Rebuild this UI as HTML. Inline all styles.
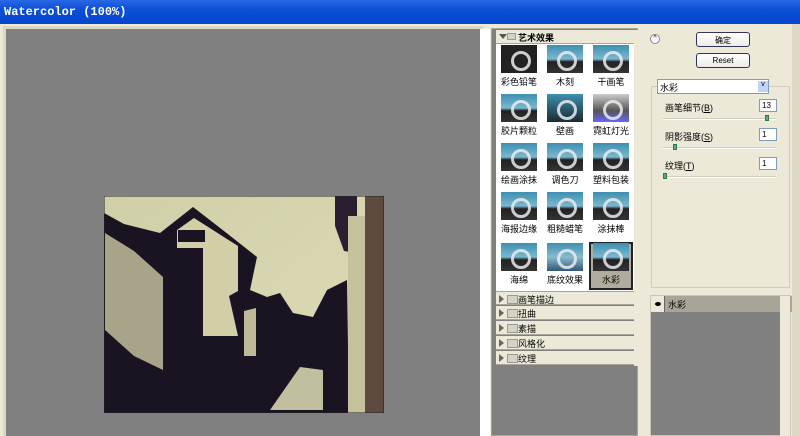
<!DOCTYPE html>
<html><head><meta charset="utf-8"><style>
*{margin:0;padding:0;box-sizing:border-box}
body{width:800px;height:436px;overflow:hidden;background:#ece9d8;font-family:"Liberation Sans","Noto Sans CJK SC",sans-serif;font-size:9px;position:relative}
.abs{position:absolute}
#title{left:0;top:0;width:800px;height:24px;background:linear-gradient(#2a67e6,#0a4fd8 40%,#0846cc);color:#fff;font-family:"Liberation Mono",monospace;font-size:12px;font-weight:bold;padding:5px 4px}
.thumb{position:absolute;width:36px;height:28px;background:linear-gradient(#3e8fb0,#7ab8d0 50%,#222 60%,#333);}
.thumb:after{content:"";position:absolute;left:10px;top:6px;width:14px;height:14px;border:3px solid rgba(235,235,240,.85);border-radius:50%}
.lbl{position:absolute;width:46px;text-align:center;font-size:9px;color:#000}
.cat{position:absolute;left:496px;width:138px;height:14px;border-bottom:1px solid #a8a598;background:#ece9d8;font-size:9px;padding:1px 0 0 22px}
.cat:before{content:"";position:absolute;left:3px;top:3px;border-left:5px solid #666;border-top:4px solid transparent;border-bottom:4px solid transparent}
.cat:after{content:"";position:absolute;left:11px;top:3px;width:9px;height:7px;background:#d6d3c6;border:1px solid #999}
.btn{position:absolute;left:696px;width:54px;height:15px;border:1px solid #335;border-radius:3px;background:linear-gradient(#fff,#ecebe6);text-align:center;font-size:8px;padding-top:2px}
.inp{position:absolute;left:759px;width:18px;height:13px;background:#fff;border:1px solid #7f9db9;font-size:8px;padding:1px 2px}
.sl{position:absolute;left:663px;width:113px;height:2px;background:#d0cdbf;border-bottom:1px solid #fff}
.kn{position:absolute;width:4px;height:6px;background:#5a8;border:1px solid #374}
</style></head><body>
<div id="title" class="abs">Watercolor (100%)</div>
<div class="abs" style="left:3px;top:26px;width:480px;height:410px;background:#ddd8c4"></div>
<div class="abs" style="left:6px;top:29px;width:474px;height:407px;background:#808080"></div>
<div class="abs" style="left:480px;top:29px;width:10px;height:407px;background:#fff"></div>
<svg class="abs" style="left:104px;top:196px" width="280" height="217" viewBox="0 0 280 217">
<defs><linearGradient id="sk" x1="0" y1="0" x2="1" y2="1"><stop offset="0" stop-color="#cfcfa8"/><stop offset="1" stop-color="#dedcb8"/></linearGradient></defs>
<rect width="280" height="217" fill="url(#sk)"/>
<polygon fill="#1a1422" points="0,17 20,28 56,37 89,11 120,35 153,61 146,94 163,101 176,97 189,117 209,121 223,94 243,84 245,217 0,217"/>
<polygon fill="#a8a48a" points="1,37 30,55 59,81 59,174 30,160 1,134"/>
<polygon fill="#d2cfa8" points="73,34 90,22 134,50 134,95 125,100 134,140 99,140 99,52 73,52"/>
<polygon fill="#1a1422" points="74,34 101,34 101,46 74,46"/>
<polygon fill="#bdb999" points="140,115 152,112 152,160 140,160"/>
<polygon fill="#2a1f30" points="231,0 253,0 253,57 240,55 231,30"/>
<rect x="244" y="20" width="17" height="197" fill="#c4c19c"/>
<rect x="261" y="0" width="19" height="217" fill="#5e4a3e"/>
<polygon fill="#c0bf9e" points="166,214 196,171 219,174 219,214"/>
<rect width="280" height="217" fill="none" stroke="#222" stroke-width="1"/>
</svg>
<div class="abs" style="left:491px;top:28px;width:147px;height:408px;border:1px solid #a8a598;background:#808080"></div>
<div class="abs" style="left:496px;top:30px;width:138px;height:265px;background:#fff"></div>
<div class="abs" style="left:496px;top:30px;width:138px;height:14px;background:#ece9d8;border-bottom:1px solid #a8a598;font-size:9px;padding:1px 0 0 22px;font-weight:bold">艺术效果</div>
<div class="abs" style="left:499px;top:34px;border-top:5px solid #555;border-left:4px solid transparent;border-right:4px solid transparent"></div>
<div class="abs" style="left:507px;top:33px;width:9px;height:7px;background:#d6d3c6;border:1px solid #999"></div>
<div class="abs" style="left:634px;top:30px;width:4px;height:336px;background:#ece9d8"></div>
<div class="abs" style="left:589px;top:242px;width:44px;height:48px;background:#b0ac9f;border:2px solid #222"></div>
<div class="thumb" style="left:501px;top:45px;background:#222"></div><div class="thumb" style="left:547px;top:45px"></div><div class="thumb" style="left:593px;top:45px"></div>
<div class="thumb" style="left:501px;top:94px"></div><div class="thumb" style="left:547px;top:94px;background:linear-gradient(#3e8fb0,#1a2a30)"></div><div class="thumb" style="left:593px;top:94px;background:linear-gradient(#ccc,#555 60%,#66f)"></div>
<div class="thumb" style="left:501px;top:143px"></div><div class="thumb" style="left:547px;top:143px"></div><div class="thumb" style="left:593px;top:143px"></div>
<div class="thumb" style="left:501px;top:192px"></div><div class="thumb" style="left:547px;top:192px"></div><div class="thumb" style="left:593px;top:192px"></div>
<div class="thumb" style="left:501px;top:243px"></div><div class="thumb" style="left:547px;top:243px;background:linear-gradient(#3e8fb0,#8bc 50%,#357)"></div><div class="thumb" style="left:593px;top:243px"></div>
<div class="lbl" style="left:496px;top:75px">彩色铅笔</div><div class="lbl" style="left:542px;top:75px">木刻</div><div class="lbl" style="left:588px;top:75px">干画笔</div>
<div class="lbl" style="left:496px;top:124px">胶片颗粒</div><div class="lbl" style="left:542px;top:124px">壁画</div><div class="lbl" style="left:588px;top:124px">霓虹灯光</div>
<div class="lbl" style="left:496px;top:173px">绘画涂抹</div><div class="lbl" style="left:542px;top:173px">调色刀</div><div class="lbl" style="left:588px;top:173px">塑料包装</div>
<div class="lbl" style="left:496px;top:222px">海报边缘</div><div class="lbl" style="left:542px;top:222px">粗糙蜡笔</div><div class="lbl" style="left:588px;top:222px">涂抹棒</div>
<div class="lbl" style="left:496px;top:273px">海绵</div><div class="lbl" style="left:542px;top:273px">底纹效果</div><div class="lbl" style="left:588px;top:273px">水彩</div>
<div class="cat" style="top:291px;border-top:1px solid #a8a598">画笔描边</div>
<div class="cat" style="top:306px">扭曲</div>
<div class="cat" style="top:321px">素描</div>
<div class="cat" style="top:336px">风格化</div>
<div class="cat" style="top:351px">纹理</div>
<div class="abs" style="left:650px;top:34px;width:10px;height:10px;border:1px solid #888;border-radius:50%;background:#fff;font-size:7px;text-align:center;line-height:8px">^</div>
<div class="btn" style="top:32px">确定</div>
<div class="btn" style="top:53px">Reset</div>
<div class="abs" style="left:651px;top:86px;width:139px;height:202px;border:1px solid #d0cdbf"></div>
<div class="abs" style="left:657px;top:79px;width:112px;height:15px;background:#fff;border:1px solid #7f9db9;font-size:9px;padding:1px 2px">水彩</div>
<div class="abs" style="left:758px;top:81px;width:10px;height:11px;background:#c1d3fb;font-size:7px;text-align:center">v</div>
<div class="abs" style="left:665px;top:101px">画笔细节(<u>B</u>)</div><div class="inp" style="top:99px">13</div>
<div class="sl" style="top:118px"></div><div class="kn" style="left:765px;top:115px"></div>
<div class="abs" style="left:665px;top:130px">阴影强度(<u>S</u>)</div><div class="inp" style="top:128px">1</div>
<div class="sl" style="top:147px"></div><div class="kn" style="left:673px;top:144px"></div>
<div class="abs" style="left:665px;top:159px">纹理(<u>T</u>)</div><div class="inp" style="top:157px">1</div>
<div class="sl" style="top:176px"></div><div class="kn" style="left:663px;top:173px"></div>
<div class="abs" style="left:650px;top:295px;width:141px;height:141px;border:1px solid #c8c5b8;background:#808080"></div>
<div class="abs" style="left:651px;top:296px;width:149px;height:16px;background:#a8a498"></div>
<div class="abs" style="left:651px;top:296px;width:14px;height:16px;background:#ece9d8;border-right:1px solid #666"></div>
<div class="abs" style="left:655px;top:302px;width:6px;height:4px;background:#000;border-radius:50%"></div>
<div class="abs" style="left:668px;top:298px">水彩</div>
<div class="abs" style="left:780px;top:296px;width:10px;height:140px;background:#ece9d8"></div>
<div class="abs" style="left:792px;top:24px;width:8px;height:412px;background:#ddd8c4"></div>
</body></html>
